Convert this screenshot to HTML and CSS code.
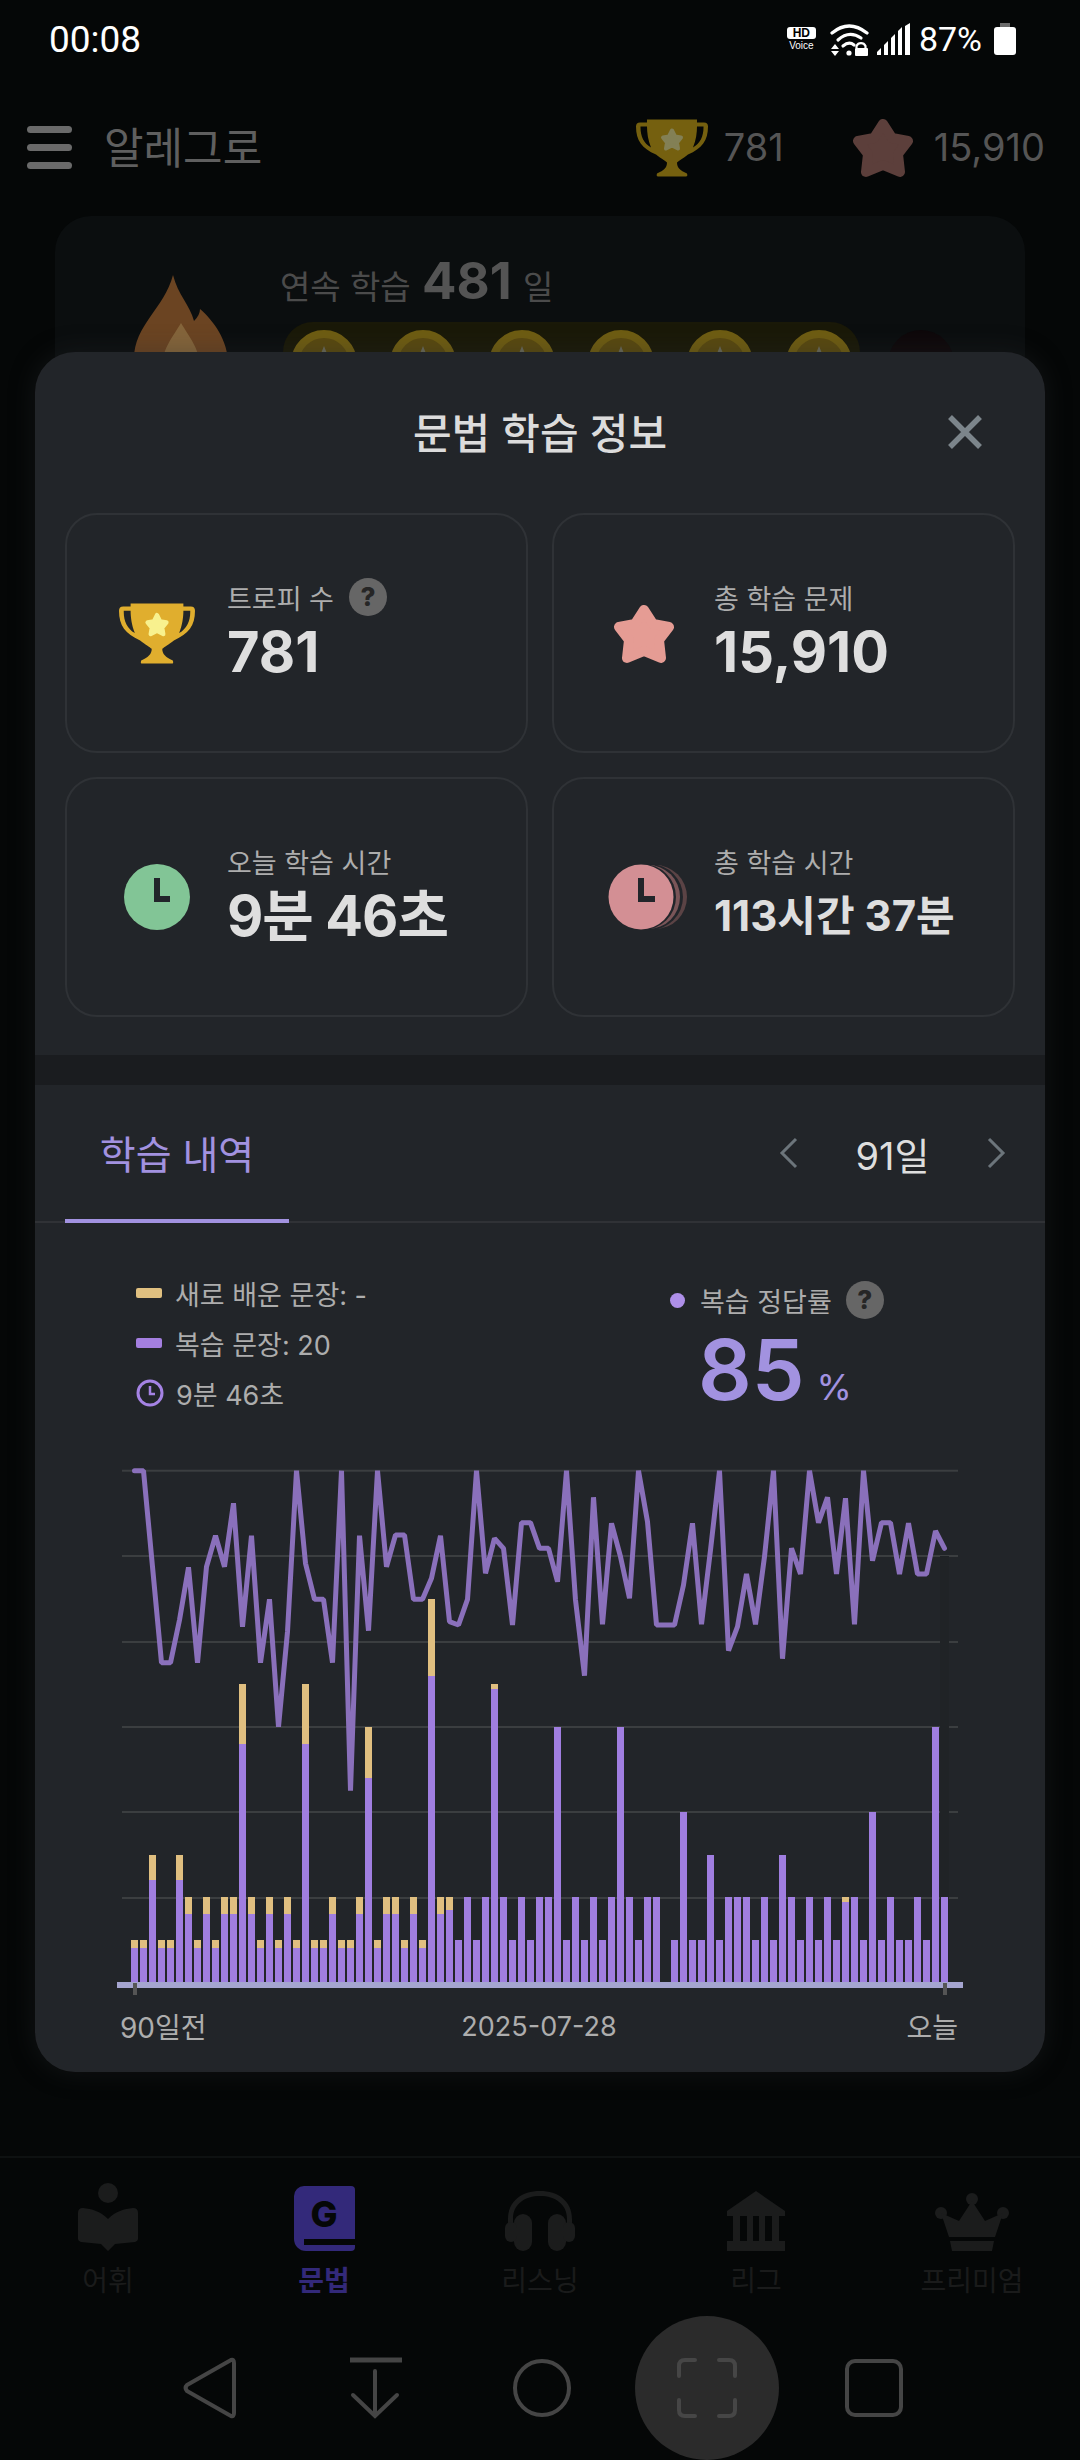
FILE: index.html
```html
<!DOCTYPE html>
<html lang="ko">
<head>
<meta charset="utf-8">
<title>문법 학습 정보</title>
<meta name="viewport" content="width=device-width,initial-scale=1">
<link rel="stylesheet" href="styles.css">
</head>
<body>

<!-- ====================== STATUS BAR ====================== -->
<header class="status">
  <span class="status-time">00:08</span>
  <div class="status-icons">
    <div class="hd"><b>HD</b><span>Voice</span></div>
    <svg class="wifi" viewBox="0 0 40 33" width="40" height="33">
      <g fill="none" stroke="#fff" stroke-width="3.2" stroke-linecap="round">
        <path d="M2 10Q19-4 37 10"/><path d="M8 17Q19 7 31 15"/><path d="M13 23Q19 18 24 22"/>
      </g>
      <circle cx="19" cy="30" r="2.600" fill="#fff"/>
      <path d="M1 26l4-5 4 5zM1 28h8l-4 5z" fill="#fff"/>
      <path d="M26.500 25v-2a5 5 0 0 1 9 0v2" fill="none" stroke="#fff" stroke-width="2.200"/>
      <rect x="25" y="25" width="13" height="8" rx="1" fill="#fff"/>
    </svg>
    <svg class="signal" viewBox="0 0 33 32" width="33" height="32">
      <path d="M0 32V29L4 25V32ZM7 32V22L11 18V32ZM14 32V15L18 11V32ZM21 32V8L25 4V32ZM28 32V3L33 0V32Z" fill="#fff"/>
    </svg>
    <span class="status-pct">87%</span>
    <div class="battery"></div>
  </div>
</header>

<!-- ====================== APP BEHIND THE SHEET ====================== -->
<section class="app-head">
  <div class="burger"><i></i><i></i><i></i></div>
  <h1 class="app-title">알레그로</h1>
  <div class="app-score">
    <svg class="trophy-sm" viewBox="0 0 72 58" width="72" height="59">
      <path fill-rule="evenodd" fill="#75600f" d="M11 1H61V4H68Q72 4 72 8C72 22 66 30 52 36C47 40 43 42 41 44C41 49 44 52 51 55Q52 58 50 58H22Q20 58 21 55C28 52 31 49 31 44C29 42 25 40 20 36C6 30 0 22 0 8Q0 4 4 4H11ZM4.500 8V9C4.500 18 8 25 15 29C12 22 11 14 11 8ZM67.500 8V9C67.500 18 64 25 57 29C60 22 61 14 61 8Z"/>
      <polygon points="36,12 39,18 45,19 41,24 42,30 36,27 30,30 31,24 27,19 33,18" fill="#838055" stroke="#838055" stroke-width="4" stroke-linejoin="round"/>
    </svg>
    <span>781</span>
    <svg class="star-sm" viewBox="0 0 64 61" width="64" height="61">
      <polygon points="32,7 41,21 57,24 47,37 49,55 32,48 15,55 17,37 7,24 23,21" fill="#5c3f3b" stroke="#5c3f3b" stroke-width="10" stroke-linejoin="round"/>
    </svg>
    <span>15,910</span>
  </div>
</section>

<main class="app-main">
  <div class="streak">
    <svg class="flame" viewBox="0 0 94 120" width="94" height="120">
      <path d="M39 0C44 20 56 30 60 46C64 42 66 38 66 34C80 46 94 66 94 88C94 108 74 120 47 120C20 120 0 108 0 84C0 50 30 34 39 0Z" fill="#6b4422"/>
      <path d="M47 48C54 60 66 74 66 92C66 104 58 112 47 112C36 112 28 104 28 92C28 74 40 60 47 48Z" fill="#85653b"/>
    </svg>
    <div class="streak-body">
      <p class="streak-line">연속 학습 <b>481</b> 일</p>
      <div class="coin-row">
        <div class="coin-band">
          <i class="coin"></i><i class="coin"></i><i class="coin"></i><i class="coin"></i><i class="coin"></i><i class="coin"></i>
        </div>
        <i class="coin coin-off"></i>
      </div>
    </div>
  </div>
</main>

<nav class="tabs">
  <div class="tab">
    <svg viewBox="0 0 60 68" width="60" height="68">
      <circle cx="30" cy="10" r="10"/>
      <path d="M0 30Q0 25 5 25C14 26 22 28 30 36C38 28 46 26 55 25Q60 25 60 30V56Q60 58 57 59L37 61L30 68L23 61L3 59Q0 58 0 56Z"/>
    </svg>
    <span>어휘</span>
  </div>
  <div class="tab tab-on">
    <div class="gbook"><b>G</b><i></i></div>
    <span>문법</span>
  </div>
  <div class="tab">
    <svg viewBox="0 0 70 60" width="70" height="60">
      <path d="M3 32V28C3 10 17 0 35 0S67 10 67 28V32H62V28C62 13 50 5 35 5S8 13 8 28V32Z"/>
      <rect x="9" y="23" width="18" height="37" rx="9"/><rect x="43" y="23" width="18" height="37" rx="9"/>
      <rect x="0" y="31" width="12" height="20" rx="6"/><rect x="58" y="31" width="12" height="20" rx="6"/>
    </svg>
    <span>리스닝</span>
  </div>
  <div class="tab">
    <svg viewBox="0 0 58 60" width="58" height="60">
      <path d="M29 0L58 20V21H0V20Z"/>
      <path d="M0 21H58V25H0ZM0 50H58V60H0ZM6 25H13V50H6ZM20 25H26V50H20ZM32 25H38V50H32ZM45 25H52V50H45Z"/>
    </svg>
    <span>리그</span>
  </div>
  <div class="tab">
    <svg viewBox="0 0 74 58" width="74" height="58">
      <circle cx="37" cy="6" r="6"/><circle cx="6" cy="20" r="6"/><circle cx="68" cy="20" r="6"/>
      <path d="M37 8L50 28L68 20L60 44H14L6 20L24 28ZM15 48H59L57 58H17Z"/>
    </svg>
    <span>프리미엄</span>
  </div>
</nav>

<nav class="sysnav">
  <div class="sys">
    <svg viewBox="0 0 54 62" width="54" height="62" fill="none" stroke="#454545" stroke-width="4" stroke-linejoin="round">
      <path d="M48 3Q51 2 51 6V56Q51 60 48 59L4 34Q1 31 4 28Z"/>
    </svg>
  </div>
  <div class="sys">
    <svg viewBox="0 0 54 62" width="54" height="62" fill="none" stroke="#454545" stroke-width="4" stroke-linecap="round">
      <path d="M1 3H53" stroke-width="5" stroke-linecap="butt"/><path d="M26 14V59M4 38L26 59L48 38"/>
    </svg>
  </div>
  <div class="sys">
    <div class="sys-home"></div>
  </div>
  <div class="sys sys-shot">
    <svg viewBox="0 0 60 60" width="60" height="60" fill="none" stroke="#464646" stroke-width="4" stroke-linecap="round">
      <path d="M2 18V8Q2 2 8 2H18M42 2H52Q58 2 58 8V18M58 42V52Q58 58 52 58H42M18 58H8Q2 58 2 52V42"/>
    </svg>
  </div>
  <div class="sys">
    <div class="sys-square"></div>
  </div>
</nav>

<!-- ====================== SHEET ====================== -->
<div class="sheet">
  <div class="sheet-head">
    <h2>문법 학습 정보</h2>
    <svg class="close" viewBox="0 0 36 36" width="36" height="36" fill="none" stroke="#7c858b" stroke-width="5.500">
      <path d="M3 3L33 33M33 3L3 33"/>
    </svg>
  </div>

  <div class="card-grid">
    <div class="card">
      <div class="card-icon">
        <svg viewBox="0 0 72 58" width="76" height="62">
          <path fill-rule="evenodd" fill="#e0ae2e" d="M11 1H61V4H68Q72 4 72 8C72 22 66 30 52 36C47 40 43 42 41 44C41 49 44 52 51 55Q52 58 50 58H22Q20 58 21 55C28 52 31 49 31 44C29 42 25 40 20 36C6 30 0 22 0 8Q0 4 4 4H11ZM4.500 8V9C4.500 18 8 25 15 29C12 22 11 14 11 8ZM67.500 8V9C67.500 18 64 25 57 29C60 22 61 14 61 8Z"/>
          <polygon points="36,12 39,18 45,19 41,24 42,30 36,27 30,30 31,24 27,19 33,18" fill="#f8f18e" stroke="#f8f18e" stroke-width="4" stroke-linejoin="round"/>
        </svg>
      </div>
      <div>
        <p class="card-label">트로피 수 <span class="q">?</span></p>
        <p class="card-value">781</p>
      </div>
    </div>
    <div class="card">
      <div class="card-icon">
        <svg viewBox="0 0 64 61" width="64" height="61">
          <polygon points="32,7 41,21 57,24 47,37 49,55 32,48 15,55 17,37 7,24 23,21" fill="#e59c94" stroke="#e59c94" stroke-width="10" stroke-linejoin="round"/>
        </svg>
      </div>
      <div>
        <p class="card-label">총 학습 문제</p>
        <p class="card-value">15,910</p>
      </div>
    </div>
    <div class="card">
      <div class="card-icon">
        <svg viewBox="0 0 66 66" width="66" height="66">
          <circle cx="33" cy="33" r="33" fill="#82c596"/>
          <path d="M33 14V35H46" fill="none" stroke="#22252a" stroke-width="6"/>
        </svg>
      </div>
      <div>
        <p class="card-label">오늘 학습 시간</p>
        <p class="card-value card-value-ko">9분 46초</p>
      </div>
    </div>
    <div class="card">
      <div class="card-icon">
        <svg class="clock-stack" viewBox="0 0 80 66" width="80" height="66">
          <circle cx="47" cy="33" r="32" fill="#5b4345"/>
          <circle cx="42" cy="33" r="33" fill="#22252a"/>
          <circle cx="40" cy="33" r="32" fill="#7a5558"/>
          <circle cx="35" cy="33" r="33" fill="#22252a"/>
          <circle cx="33" cy="33" r="32.500" fill="#d38f94"/>
          <path d="M33 14V35H47" fill="none" stroke="#22252a" stroke-width="6"/>
        </svg>
      </div>
      <div>
        <p class="card-label">총 학습 시간</p>
        <p class="card-value card-value-sm">113시간 37분</p>
      </div>
    </div>
  </div>

  <div class="band"></div>

  <div class="history-tabs">
    <div class="history-tab">학습 내역</div>
    <div class="pager">
      <svg viewBox="0 0 20 32" width="20" height="32" fill="none" stroke="#6c757b" stroke-width="3"><path d="M17 2L3 16L17 30"/></svg>
      <span>91일</span>
      <svg viewBox="0 0 20 32" width="20" height="32" fill="none" stroke="#6c757b" stroke-width="3"><path d="M3 2L17 16L3 30"/></svg>
    </div>
  </div>

  <div class="stats">
    <ul class="legend">
      <li><i class="swatch swatch-new"></i>새로 배운 문장: -</li>
      <li><i class="swatch swatch-review"></i>복습 문장: 20</li>
      <li>
        <svg class="legend-clock" viewBox="0 0 28 28" width="28" height="28" fill="none" stroke="#a583e4" stroke-width="3">
          <circle cx="14" cy="14" r="12"/><path d="M14 7V15H19" stroke-width="2.500"/>
        </svg>
        9분 46초
      </li>
    </ul>
    <div class="rate">
      <p class="rate-label"><i class="dot"></i>복습 정답률 <span class="q">?</span></p>
      <p class="rate-value">85<small>%</small></p>
    </div>
  </div>

  <svg class="chart" id="chart" viewBox="0 0 880 550" width="880" height="550"></svg>

  <div class="axis-labels">
    <span class="axis-end">90일전</span>
    <span>2025-07-28</span>
    <span class="axis-end">오늘</span>
  </div>
</div>

<script>
/* ==== chart data: 91 days ==== */
const review=[8,8,24,8,8,24,16,8,16,8,16,16,56,16,8,16,8,16,8,56,8,8,16,8,8,16,48,8,16,16,8,16,8,72,16,17,10,20,10,20,69,20,10,20,10,20,
  20,60,10,20,10,20,10,20,60,20,10,20,20,0,10,40,10,10,30,10,20,20,20,10,20,10,30,20,10,20,10,20,10,19,20,10,40,10,20,10,10,20,10,60,20];
const fresh={0:2,1:2,2:6,3:2,4:2,5:6,6:4,7:2,8:4,9:2,10:4,11:4,12:14,13:4,14:2,15:4,16:2,17:4,18:2,19:14,20:2,21:2,22:4,23:2,24:2,25:4,26:12,27:2,28:4,29:4,30:2,31:4,32:2,33:18,34:4,35:3,40:1,79:1};
/* line y, in thirds of a pixel from the top of the chart box */
const rate=[62,62,350,638,638,510,352,638,350,257,350,160,530,257,638,448,830,545,62,340,448,448,638,62,1022,257,542,62,350,255,255,448,448,385,257,515,525,448,62,370,265,295,525,218,218,295,
  295,395,62,450,677,142,523,220,320,445,62,215,525,525,525,405,220,523,300,62,602,530,372,523,320,62,626,295,372,62,218,142,372,145,523,62,332,218,218,372,220,372,372,243,295];

const NS='http://www.w3.org/2000/svg',chart=document.getElementById('chart');
const UNIT=4.26,BASE=532.5;
function add(tag,attrs){const el=document.createElementNS(NS,tag);for(const k in attrs)el.setAttribute(k,attrs[k]);chart.appendChild(el);return el;}

[20.7,106,192,277,362,448].forEach(y=>add('rect',{class:'grid',x:22,y:y-1,width:836,height:2}));
add('rect',{class:'hover',x:840,y:106,width:9,height:BASE-106});

review.forEach((v,i)=>{
  const x=31+9*i,n=fresh[i]||0;
  if(v)add('rect',{class:'bar-review',x:x,y:BASE-v*UNIT,width:7,height:v*UNIT});
  if(n)add('rect',{class:'bar-new',x:x,y:BASE-(v+n)*UNIT,width:7,height:n*UNIT});
});

add('polyline',{class:'rate-line',points:rate.map((z,i)=>(34.5+9*i)+','+(z/3).toFixed(1)).join(' ')});

add('rect',{class:'axis',x:17,y:532,width:846,height:6});
add('rect',{class:'tick',x:33,y:533,width:4,height:12});
add('rect',{class:'tick',x:843,y:533,width:4,height:12});
</script>
</body>
</html>
```

FILE: styles.css
```css
/* ---------- Base ---------- */
*{margin:0;padding:0;box-sizing:border-box}
html,body{height:100%;background:#050707}
body{width:1080px;height:2460px;position:relative;overflow:hidden;display:flex;flex-direction:column;
  font-family:Inter,"Noto Sans CJK KR",sans-serif;color:#ddd}
ul{list-style:none}
i{display:block}

/* ---------- Status bar ---------- */
.status{height:78px;flex:none;display:flex;align-items:center;justify-content:space-between;padding:0 64px 0 49px;color:#fff;font-family:Roboto,sans-serif}
.status-time{font-size:37px}
.status-icons{display:flex;align-items:center}
.hd{width:29px;display:flex;flex-direction:column;align-items:center;margin-right:14px}
.hd b{width:29px;height:12px;background:#fff;color:#000;border-radius:3px;font-size:12px;line-height:12px;text-align:center;font-family:"Liberation Sans",sans-serif}
.hd span{font-size:10px;line-height:13px;font-family:"Liberation Sans",sans-serif}
.signal{margin-left:7px}
.status-pct{font-size:34px;margin-left:9px}
.battery{width:22px;height:28px;margin:4px 0 0 12px;background:#fff;border-radius:3px;position:relative}
.battery:before{content:"";position:absolute;left:6px;top:-4px;width:10px;height:4px;background:#6b6b6b}

/* ---------- App behind the sheet ---------- */
.app-head{height:138px;flex:none;display:flex;align-items:center;padding:0 35px 0 27px}
.burger{width:45px;margin-right:32px;display:flex;flex-direction:column;gap:11px}
.burger i{height:7px;border-radius:4px;background:#6a6a6a}
.app-title{font-size:43px;font-weight:400;color:#5f5f5f;margin-bottom:5px}
.app-score{margin-left:auto;display:flex;align-items:center;font-size:38px;color:#555}
.trophy-sm{margin-right:16px}
.star-sm{margin:0 19px 0 67px}

.app-main{flex:1;min-height:0;padding:0 55px}
.streak{height:400px;background:#0b0e0f;border-radius:36px;display:flex;padding:59px 0 0 79px}
.flame{flex:none;margin-right:52px}
.streak-body{margin-top:-24px}
.streak-line{font-size:33px;color:#4b4b4b;line-height:60px;white-space:nowrap}
.streak-line b{font-size:51px;color:#545454;font-weight:700;margin:0 2px}
.coin-row{display:flex;margin-top:5px;margin-left:3px}
.coin-band{height:90px;padding:8px;display:flex;gap:33px;background:#1a1908;border-radius:30px}
.coin{width:66px;height:66px;border-radius:50%;background:#5a4a10;border:8px solid #6f5d12;position:relative}
.coin:after{content:"";position:absolute;left:21px;top:8px;border:4px solid transparent;border-bottom:10px solid #6a6a5a;border-top:0}
.coin-off{background:#0e080a;border:0;margin:8px 0 0 28px}
.coin-off:after{display:none}

/* ---------- Bottom tabs ---------- */
.tabs{height:144px;flex:none;display:flex;border-top:2px solid #0e1111;padding-top:27px}
.tab{width:216px;height:112px;display:flex;flex-direction:column;align-items:center;justify-content:flex-end;gap:14px;font-size:28px;color:#1a1b1b}
.tab svg{flex:none;fill:#1b1c1c}
.tab span{line-height:32px}
.tab-on{color:#33297a;font-weight:700}
.gbook{width:61px;height:65px;position:relative;background:#33297a;border-radius:10px 4px 4px 12px;text-align:center;font:800 36px/56px Inter,sans-serif;color:#050707}
.gbook b{font-weight:800}
.gbook i{position:absolute;left:10px;right:0;bottom:6px;height:6px;background:#050707}

/* ---------- System nav ---------- */
.sysnav{height:160px;flex:none;display:flex;padding:16px 0 0 127px}
.sys{width:166px;height:144px;display:flex;align-items:center;justify-content:center}
.sys-shot{width:144px;margin:0 12px 0 10px;border-radius:50%;background:#2b2b2b}
.sys-home{width:58px;height:58px;border:4px solid #454545;border-radius:50%}
.sys-square{width:58px;height:58px;border:4px solid #454545;border-radius:10px}

/* ---------- Sheet ---------- */
.sheet{position:absolute;left:35px;top:352px;width:1010px;height:1720px;background:#222529;border-radius:40px;box-shadow:0 0 26px rgba(40,44,46,.35)}
.sheet:after{content:"";position:absolute;left:19px;bottom:-2px;width:46px;height:20px;background:#1e2125;border-radius:0 0 10px 10px;z-index:-1}
.sheet-head{height:161px;position:relative;display:flex;align-items:center;justify-content:center}
.sheet-head h2{font-size:42px;font-weight:500;color:#dcdcdc;margin-bottom:4px}
.close{position:absolute;right:62px;top:62px}

/* ---------- Cards ---------- */
.card-grid{display:grid;grid-template-columns:1fr 1fr;grid-auto-rows:240px;gap:24px;padding:0 30px}
.card{border:2px solid #2f3236;border-radius:32px;display:flex;align-items:center}
.card-icon{width:160px;flex:none;padding-left:20px;display:flex;justify-content:center}
.clock-stack{margin-left:8px}
.card-label{display:flex;align-items:center;gap:15px;font-size:27px;color:#adadad;height:38px}
.card-value{font-size:56px;line-height:72px;font-weight:700;color:#dedede;white-space:nowrap}
.card-value-ko{letter-spacing:-1px}
.card-value-sm{font-size:42px}
.q{width:38px;height:38px;flex:none;border-radius:50%;background:#666;color:#262626;font-size:26px;font-weight:800;line-height:38px;text-align:center}

.band{height:30px;margin-top:38px;background:#1a1c1f}

/* ---------- History ---------- */
.history-tabs{height:138px;padding:0 39px 0 30px;display:flex;justify-content:space-between;border-bottom:2px solid #303236}
.history-tab{width:224px;height:138px;padding-top:46px;text-align:center;font-size:39px;line-height:48px;color:#a292e0;border-bottom:4px solid #a292e0}
.pager{display:flex;align-items:center;height:136px}
.pager span{width:187px;text-align:center;font-size:38px;color:#dedede}

.stats{height:227px;padding:45px 0 0 101px;display:flex}
.legend{width:534px;flex:none;font-size:27px;color:#adadad}
.legend li{height:50px;display:flex;align-items:center}
.swatch{width:26px;height:10px;margin-right:13px;border-radius:2px}
.swatch-new{background:#e0c080}
.swatch-review{background:#a47fe0}
.legend-clock{margin-right:12px}
.rate{padding-top:12px}
.rate-label{display:flex;align-items:center;height:40px;font-size:27px;color:#adadad;white-space:nowrap}
.rate-label .q{margin-left:14px}
.dot{width:15px;height:15px;border-radius:50%;background:#ae8fe8;margin-right:15px}
.rate-value{padding:4px 0 0 28px;font-size:84px;line-height:92px;font-weight:600;color:#a292e0}
.rate-value small{font-size:36px;font-weight:400;margin-left:12px}

/* ---------- Chart ---------- */
.chart{display:block;margin-left:65px}
.grid{fill:#3b3e40}
.hover{fill:#202326}
.bar-review{fill:#a07ee0;shape-rendering:crispEdges}
.bar-new{fill:#e0bf80;shape-rendering:crispEdges}
.rate-line{fill:none;stroke:#8a70bb;stroke-width:5;stroke-linejoin:bevel;stroke-linecap:round}
.axis{fill:#a5a5d0}
.tick{fill:#555}
.axis-labels{display:grid;grid-template-columns:1fr auto 1fr;align-items:center;height:36px;margin-top:6px;padding:0 87px 0 85px;font-size:27px;color:#adadad}
.axis-end{font-size:28px}
.axis-end:last-child{text-align:right}
```
